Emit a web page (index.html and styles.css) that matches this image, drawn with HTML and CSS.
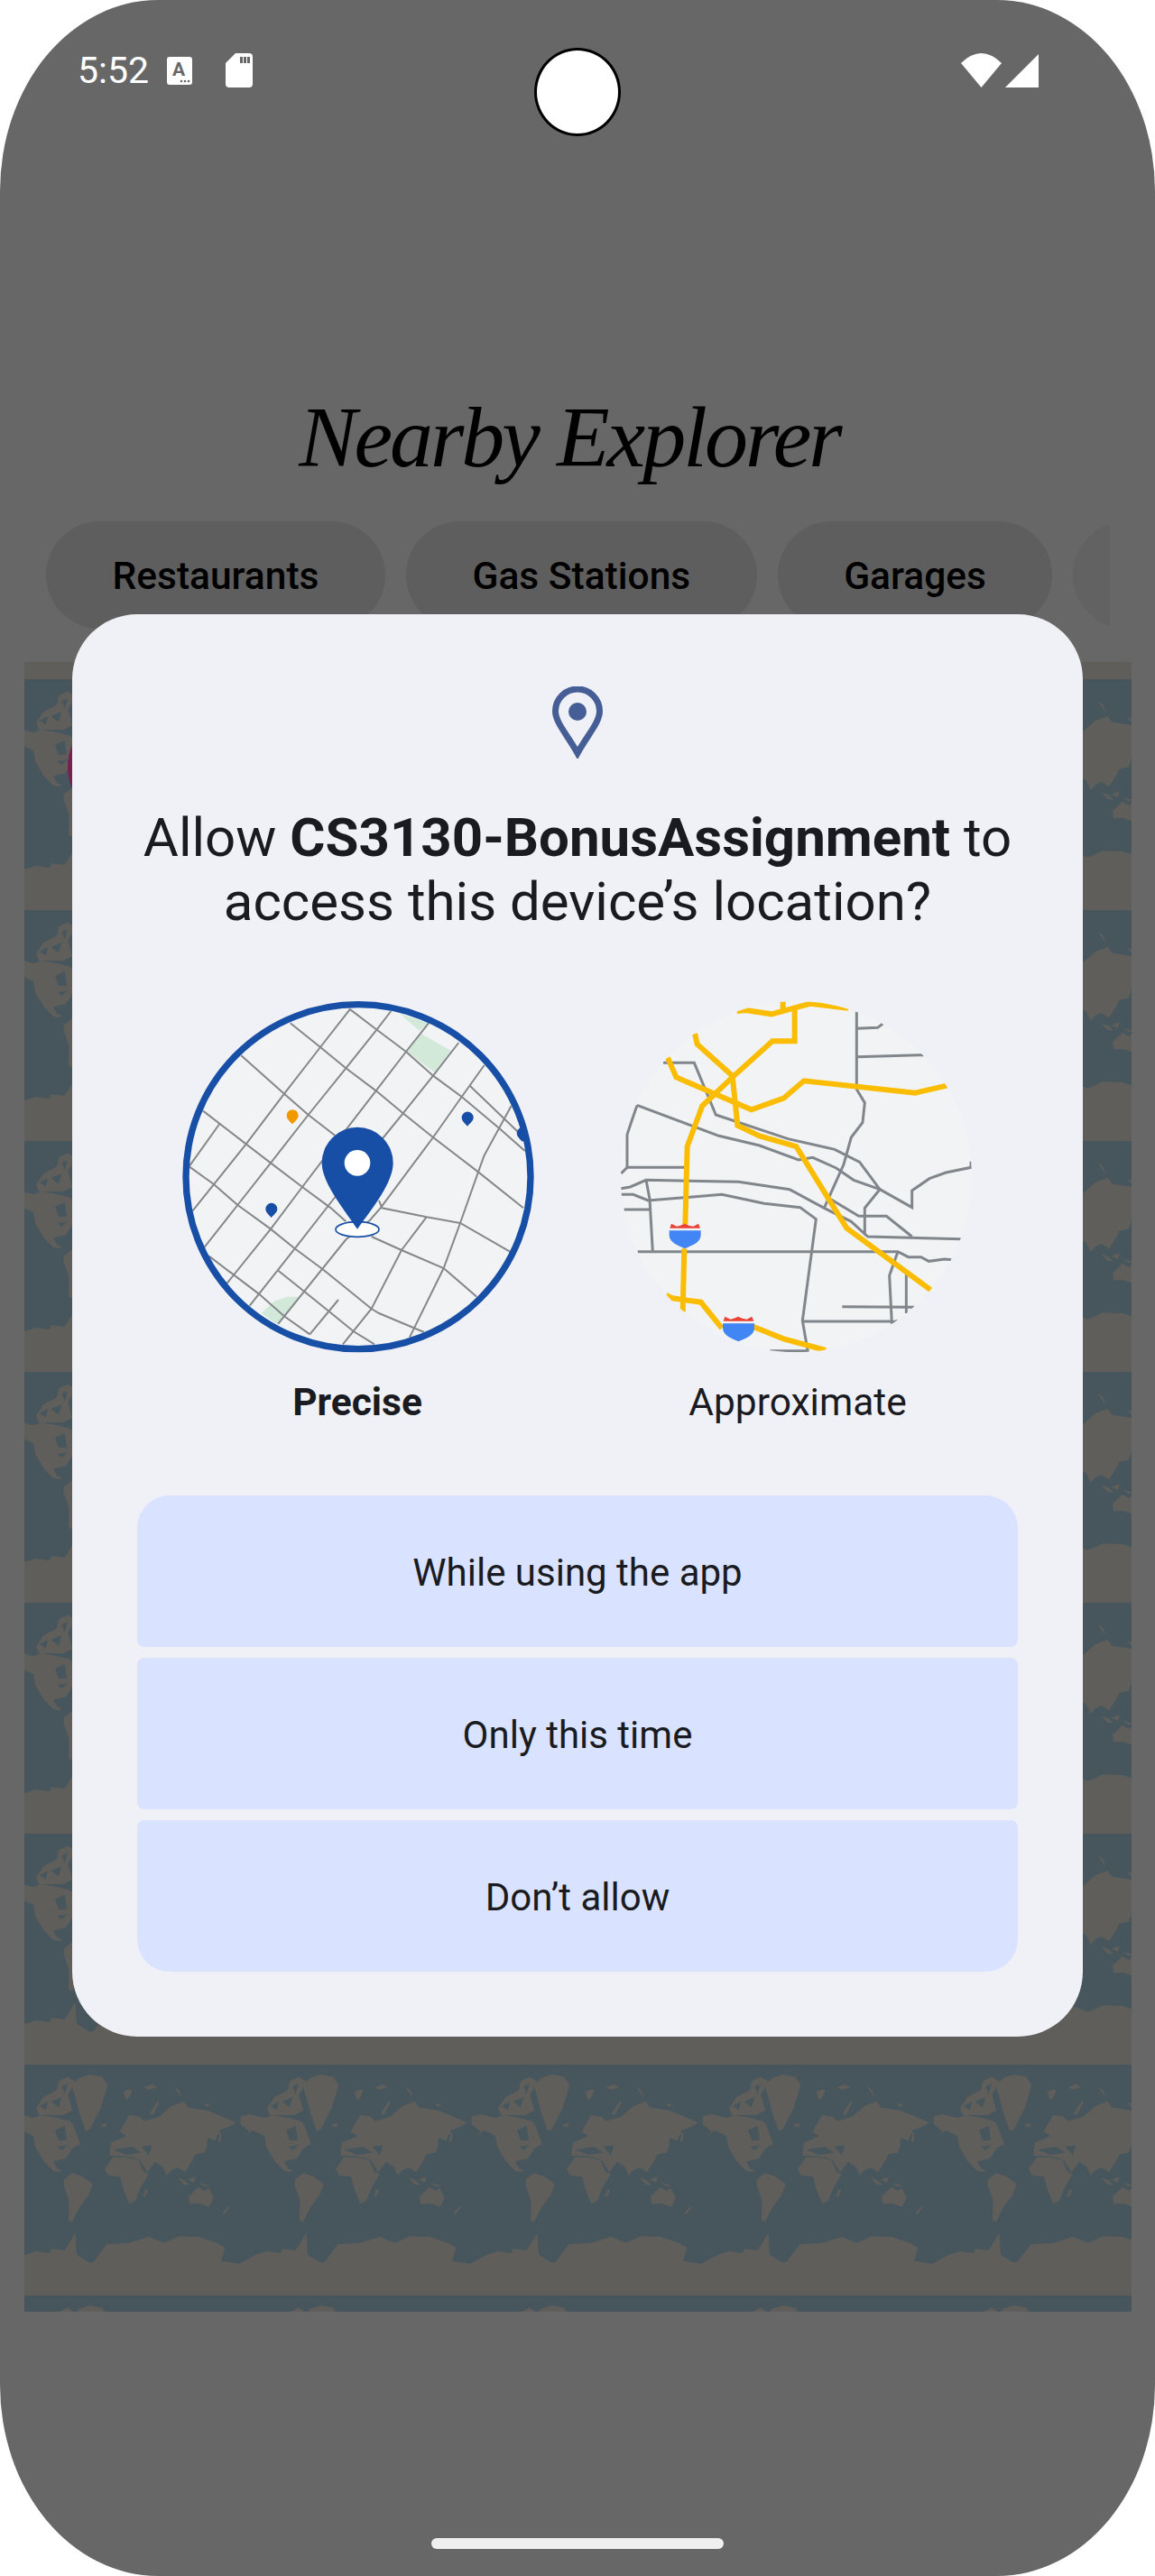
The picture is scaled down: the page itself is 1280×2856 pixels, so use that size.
FILE: index.html
```html
<!DOCTYPE html>
<html lang="en">
<head>
  <meta charset="UTF-8">
  <meta name="viewport" content="width=device-width, initial-scale=1.0">
  <title>Nearby Explorer</title>
  <link rel="stylesheet" href="styles.css">
</head>
<body>
  <div class="phone">
    <div class="status-bar">
      <span class="clock">5:52</span>
      <svg class="icon-a" viewBox="0 0 28 31">
        <rect width="28" height="31" rx="3" fill="#fff"/>
        <text x="13" y="21" class="icon-a-letter">A</text>
        <circle cx="16" cy="27" r="1.3" fill="#676767"/>
        <circle cx="20" cy="27" r="1.3" fill="#676767"/>
        <circle cx="24" cy="27" r="1.3" fill="#676767"/>
      </svg>
      <svg class="icon-sd" viewBox="0 0 30 38">
        <path d="M11 0H26a4 4 0 0 1 4 4V34a4 4 0 0 1-4 4H4a4 4 0 0 1-4-4V11Z" fill="#fff"/>
        <path d="M16 4h3v7h-3zM20 4h3v7h-3zM24 4h3v7h-3z" fill="#676767"/>
      </svg>
      <span class="status-spacer"></span>
      <svg class="icon-wifi" viewBox="0 0 45 38"><path d="M0 11Q22.5 -11 45 11L22.5 38Z" fill="#fff"/></svg>
      <svg class="icon-signal" viewBox="0 0 37 37"><path d="M37 0V37H0Z" fill="#fff"/></svg>
    </div>

    <h1 class="app-title">Nearby Explorer</h1>

    <div class="chips">
      <div class="chip">Restaurants</div>
      <div class="chip">Gas Stations</div>
      <div class="chip">Garages</div>
      <div class="chip chip-faded"></div>
    </div>

    <div class="map-strip">
      <svg class="world" width="1227" height="1829">
        <defs>
          <pattern id="tile" x="-18" y="1555" width="256" height="256" viewBox="27 27 768 768" patternUnits="userSpaceOnUse">
            <rect x="27" y="27" width="768" height="768" fill="#47565c"/>
            <g fill="#5f5e5a">
              <path d="M32 200L62 192 112 205 137 195 192 205 232 215 242 225 255 262 267 290 240 305 232 320 217 340 192 345 177 350 190 372 207 380 196 384 177 380 147 350 117 300 112 265 72 245 42 270 62 250 32 225Z"/>
              <path d="M120 172L145 135 190 112 195 82 225 68 252 85 226 125 240 180 210 195 130 195Z"/>
              <path d="M240 100L262 72 300 60 340 68 358 95 335 170 300 240 285 248 265 190Z"/>
              <path d="M335 225L355 222 352 235 338 233Z"/>
              <path d="M410 118L425 110 440 112 430 135 420 145Z"/>
              <path d="M480 103L505 92 522 103 495 110Z"/>
              <path d="M580 100L595 112 605 135 590 118Z"/>
              <path d="M498 190L525 148 530 152 508 195Z"/>
              <path d="M675 155L700 160 690 168Z"/>
              <path d="M212 410L240 388 275 400 308 425 295 460 265 500 240 550 228 545 230 480 212 430Z"/>
              <path d="M365 315L370 285 385 280 420 265 398 250 430 195 462 200 480 215 530 200 570 165 610 150 625 170 690 180 740 200 785 220 760 235 730 245 715 280 690 270 688 300 680 320 650 325 640 345 615 385 590 368 570 378 555 395 540 365 515 350 490 385 465 345 440 335 400 330 365 330Z"/>
              <path d="M348 375L375 335 420 335 460 345 478 385 495 390 465 440 450 480 430 490 410 440 400 400 360 395Z"/>
              <path d="M485 440L492 445 482 468 476 462Z"/>
              <path d="M628 465L660 435 680 447 695 438 710 470 695 500 665 490 630 490Z"/>
              <path d="M590 402L610 425 630 428 612 412Z"/>
              <path d="M625 410L650 400 645 420Z"/>
              <path d="M660 420L698 430 680 432Z"/>
              <path d="M725 285L730 262 722 250 735 255 735 280Z"/>
              <path d="M740 520L765 495 758 510 745 525Z"/>
              <path d="M27 690L60 672 81 660 120 648 165 655 170 640 215 645 228 625 250 588 255 660 295 685 310 685 355 625 430 620 495 600 545 620 595 598 660 600 720 620 748 635 735 680 795 690V795H27Z"/>
            </g>
            <g fill="#47565c">
              <path d="M183 245L215 230 222 278 195 280Z"/>
              <path d="M130 165L160 150 152 178ZM170 150L205 135 195 170ZM205 100L225 90 215 125Z"/>
              <path d="M190 300L225 295 205 312Z"/>
              <path d="M375 310L440 300 470 320 420 328Z"/>
              <path d="M470 300L505 295 495 330Z"/>
            </g>
          </pattern>
        </defs>
        <rect width="1227" height="1829" fill="url(#tile)"/>
      </svg>
      <span class="marker"></span>
    </div>

    <div class="home-bar"></div>

    <div class="camera"></div>

    <div class="dialog">
      <svg class="dialog-icon" viewBox="0 0 56 80">
        <path d="M28 74C17 54 3.500 40 3.500 27.500A24.500 24.500 0 0 1 52.500 27.500C52.500 40 39 54 28 74Z" fill="none" stroke="#455f96" stroke-width="7"/>
        <circle cx="28" cy="28" r="10" fill="#455f96"/>
      </svg>

      <h2 class="dialog-title">Allow <b>CS3130-BonusAssignment</b> to access this device’s location?</h2>

      <div class="options">
        <div class="option">
          <svg class="option-map" viewBox="-12 0 1320 1260">
            <defs><clipPath id="clip-precise"><circle cx="651" cy="641" r="573"/></clipPath></defs>
            <circle cx="651" cy="641" r="573" fill="#f1f3f4"/>
            <g clip-path="url(#clip-precise)">
              <g fill="#d2e9da">
                <path d="M790 100L885 130 855 155Z"/>
                <path d="M860 165L960 222 905 295 815 225Z"/>
                <path d="M330 1095L370 1055 415 1040 460 1040 385 1135Z"/>
              </g>
              <g fill="none" stroke="#85878a" stroke-width="6">
                <path d="M100 755L280 530 405 365 525 210 625 82"/>
                <path d="M140 875L250 735 360 595 485 435 610 280 710 155 760 90"/>
                <path d="M215 995L360 815 465 675 560 550 710 355 810 225 885 130"/>
                <path d="M290 1070L440 880 565 720 735 510 800 430 900 305 985 195"/>
                <path d="M385 1130L610 850 690 785 725 745 900 510 995 375 1070 270"/>
                <path d="M90 605L190 465"/>
                <path d="M490 1165L585 1050"/>
                <path d="M600 1198L695 1080 795 885 878 775"/>
                <path d="M822 1175L935 945 990 795 1050 625 1070 570 1160 405"/>
                <path d="M625 85L710 150 810 225 900 305 995 375 1120 480 1205 555"/>
                <path d="M425 130L525 210 610 280 710 355 800 430 900 510 1050 625 1200 745"/>
                <path d="M262 238L405 365 485 435 575 505"/>
                <path d="M135 422L275 530 360 595 465 675 560 745 610 790"/>
                <path d="M90 608L170 665 250 735 360 815 440 880 535 950 695 1080 720 1095 870 1158"/>
                <path d="M155 905L238 968 320 1030 405 1105 490 1165"/>
                <path d="M385 953L475 1025 555 1090 635 1155 705 1198"/>
                <path d="M695 840L795 885 935 945 1045 1040"/>
                <path d="M720 720L730 745 878 775 990 795 1155 890"/>
                <path d="M1022 338L1180 490"/>
              </g>
              <path d="M432 466C422 455 413 448 413 437A19.500 19.500 0 0 1 452 437C452 448 442 455 432 466Z" fill="#f29900"/>
              <path d="M362 777C352 766 343 759 343 748A19.500 19.500 0 0 1 382 748C382 759 372 766 362 777Z" fill="#174ea6"/>
              <path d="M1014 473C1004 462 995 455 995 444A19.500 19.500 0 0 1 1034 444C1034 455 1024 462 1014 473Z" fill="#174ea6"/>
              <path d="M1197 525C1187 514 1178 507 1178 496A19.500 19.500 0 0 1 1217 496C1217 507 1207 514 1197 525Z" fill="#174ea6"/>
            </g>
            <circle cx="651" cy="641" r="573" fill="none" stroke="#174ea6" stroke-width="22"/>
            <ellipse cx="648" cy="816" rx="72" ry="25" fill="#fff" stroke="#174ea6" stroke-width="5"/>
            <path d="M648 815C600 745 530 660 530 595A118.500 118.500 0 0 1 767 595C767 660 700 745 648 815Z" fill="#174ea6"/>
            <circle cx="648" cy="595" r="43" fill="#fff"/>
          </svg>
          <div class="option-label option-label-on">Precise</div>
        </div>
        <div class="option">
          <svg class="option-map" viewBox="-18 0 1320 1260">
            <defs><clipPath id="clip-approx"><circle cx="637" cy="641" r="584"/></clipPath></defs>
            <circle cx="637" cy="641" r="584" fill="#f1f3f4"/>
            <g clip-path="url(#clip-approx)">
              <g fill="none" stroke="#80868b" stroke-width="9">
                <path d="M838 92V350L865 395 858 460 820 510 795 600 730 745"/>
                <path d="M838 148L908 145 925 132"/>
                <path d="M838 242L1060 236"/>
                <path d="M195 262H298L370 435 610 515 765 550 848 592 915 683 1022 743V687L1080 647 1135 627 1218 610V590"/>
                <path d="M108 403L380 505 515 537 645 585 692 577 770 612 828 652 915 683 865 745V835"/>
                <path d="M108 403L75 500V610L55 630"/>
                <path d="M75 610H265"/>
                <path d="M55 680L85 675 138 652 445 658 615 683 730 745 820 790 875 840 1185 848"/>
                <path d="M750 715L845 772H937L1022 840"/>
                <path d="M138 652L150 715 160 890"/>
                <path d="M55 700H95L145 720 390 700 530 730 650 743 703 782 658 1120 675 1218"/>
                <path d="M65 750H152"/>
                <path d="M110 890H975L1010 908H1052L1078 922 1130 915 1155 917"/>
                <path d="M975 890L947 970 955 1125 975 1120"/>
                <path d="M1003 965V1095"/>
                <path d="M790 1073L1030 1075"/>
                <path d="M658 1122H955"/>
                <path d="M550 1220H680"/>
              </g>
              <g fill="none" stroke="#fbbc04" stroke-width="18">
                <path d="M440 90L470 87 555 100 685 65 810 80"/>
                <path d="M593 58V90"/>
                <path d="M632 85V190H558L425 310 325 405 275 540 268 800"/>
                <path d="M300 165L308 200 425 305 442 470 515 505 637 540 745 715 805 812 1085 1018"/>
                <path d="M210 245L238 310 488 418 595 380 663 322 1033 362 1138 338"/>
                <path d="M265 880L260 1090"/>
                <path d="M205 1035L225 1045 320 1058 390 1145"/>
                <path d="M495 1140L595 1180 735 1218"/>
              </g>
              <g id="shield">
                <path d="M217 812L222 797 240 806 252 803 266 797 280 803 295 806 312 797 318 812Z" fill="#ea4335"/>
                <path d="M215 820H320V835C320 860 290 870 267 880 245 870 215 860 215 835Z" fill="#4285f4"/>
              </g>
              <use href="#shield" x="178" y="309"/>
            </g>
          </svg>
          <div class="option-label">Approximate</div>
        </div>
      </div>

      <div class="actions">
        <div class="action action-first">While using the app</div>
        <div class="action">Only this time</div>
        <div class="action action-last">Don’t allow</div>
      </div>
    </div>
  </div>
</body>
</html>
```

FILE: styles.css
```css
body {
  margin: 0;
  background-color: #fff;
  font-family: Roboto, sans-serif;
}

.phone {
  position: relative;
  display: flex;
  flex-direction: column;
  width: 1280px;
  height: 2856px;
  overflow: hidden;
  background-color: #676767;
  border-radius: 175px / 212px;
}

.status-bar {
  display: flex;
  align-items: center;
  height: 38px;
  padding: 59px 129px 0 86px;
}

.clock {
  color: #fff;
  font-size: 41px;
  line-height: 38px;
}

.icon-a {
  width: 28px;
  height: 31px;
  margin-left: 20px;
}

.icon-a-letter {
  fill: #676767;
  font-size: 21px;
  font-weight: 700;
  text-anchor: middle;
}

.icon-sd {
  width: 30px;
  height: 38px;
  margin-left: 37px;
}

.status-spacer {
  flex: 1;
}

.icon-wifi {
  width: 45px;
  height: 38px;
}

.icon-signal {
  width: 37px;
  height: 37px;
  margin-left: 4px;
}

.app-title {
  margin: 327px 0 0;
  height: 121px;
  padding-right: 18px;
  color: #000;
  font-family: "Liberation Serif", serif;
  font-size: 96px;
  font-style: italic;
  font-weight: 400;
  letter-spacing: -3px;
  line-height: 121px;
  text-align: center;
}

.chips {
  display: flex;
  gap: 23px;
  width: 1179px;
  height: 119px;
  margin: 33px 0 0 51px;
  overflow: hidden;
}

.chip {
  flex: none;
  height: 119px;
  padding: 0 73.5px;
  background-color: #5e5e5e;
  border-radius: 60px;
  color: #000;
  font-size: 42.5px;
  font-weight: 500;
  line-height: 122px;
}

.chip-faded {
  background-color: #626262;
}

.map-strip {
  position: relative;
  height: 1829px;
  margin: 37px 26px 0 27px;
  overflow: hidden;
}

.world {
  display: block;
}

.marker {
  position: absolute;
  top: 56px;
  left: 48px;
  width: 120px;
  height: 120px;
  background-color: #76214f;
  border-radius: 50%;
}

.home-bar {
  width: 324px;
  height: 12px;
  margin: auto auto 30px;
  background-color: #f0f0f0;
  border-radius: 6px;
}

.camera {
  position: absolute;
  top: 53px;
  left: 592px;
  box-sizing: border-box;
  width: 96px;
  height: 98px;
  background-color: #fff;
  border: 3px solid #000;
  border-radius: 50%;
}

.dialog {
  position: absolute;
  top: 681px;
  left: 80px;
  box-sizing: border-box;
  width: 1120px;
  height: 1577px;
  padding: 80px 72px 0;
  background-color: #f0f0f7;
  border-radius: 72px;
}

.dialog-icon {
  display: block;
  width: 56px;
  height: 80px;
  margin: 0 auto;
}

.dialog-title {
  margin: 52px 0 0;
  color: #1a1b20;
  font-size: 60px;
  font-weight: 400;
  line-height: 71px;
  text-align: center;
}

.dialog-title b {
  font-weight: 700;
}

.options {
  display: grid;
  grid-template-columns: 1fr 1fr;
  margin-top: 56px;
}

.option {
  display: flex;
  flex-direction: column;
  align-items: center;
}

.option-map {
  display: block;
  width: 440px;
  height: 420px;
}

.option-label {
  margin-top: 20px;
  color: #1a1b20;
  font-size: 42.5px;
  line-height: 48px;
}

.option-label-on {
  font-weight: 700;
}

.actions {
  display: flex;
  flex-direction: column;
  gap: 12px;
  margin-top: 79px;
}

.action {
  height: 168px;
  background-color: #d9e2ff;
  border-radius: 8px;
  color: #1a1b20;
  font-size: 42px;
  line-height: 172px;
  text-align: center;
}

.action-first {
  border-radius: 36px 36px 8px 8px;
}

.action-last {
  border-radius: 8px 8px 36px 36px;
}
```
